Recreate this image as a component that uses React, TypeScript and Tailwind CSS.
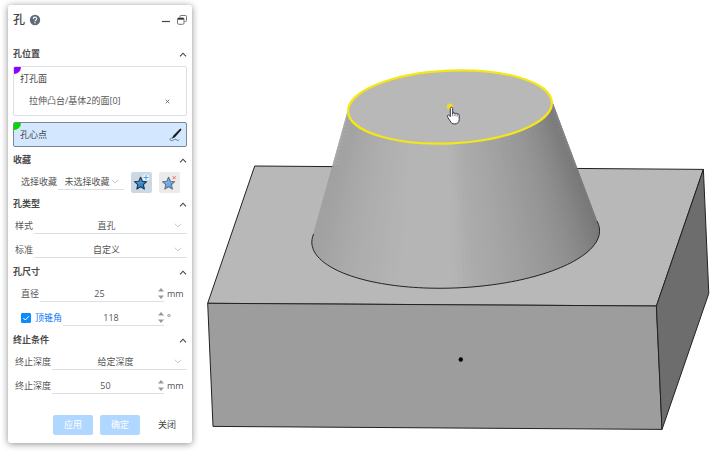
import { useState, type ReactNode } from "react";

const FONT = "font-['Open_Sans','Noto_Sans_CJK_SC',sans-serif]";

function ChevronUp() {
  return (
    <svg viewBox="0 0 8 5" className="h-[5px] w-2" fill="none" stroke="#444" strokeWidth="1.1">
      <path d="M1 4.3 4 1.2 7 4.3" />
    </svg>
  );
}

function Section({ title, children }: { title: string; children: ReactNode }) {
  const [open, setOpen] = useState(true);
  return (
    <section>
      <h2>
        <button
          type="button"
          aria-expanded={open}
          onClick={() => setOpen(!open)}
          className="flex h-5 w-full items-center justify-between font-bold text-[#4a4a4a]"
        >
          {title}
          <ChevronUp />
        </button>
      </h2>
      {open && children}
    </section>
  );
}

function Choice({ id, value, className }: { id: string; value: string; className: string }) {
  return (
    <div className={`relative h-4 border-b border-[#dcdfe6] ${className}`}>
      <select
        id={id}
        defaultValue={value}
        className="h-[15px] w-full appearance-none bg-transparent pr-2 text-center [text-align-last:center] outline-none"
      >
        <option>{value}</option>
      </select>
      <svg
        viewBox="0 0 8 5"
        className="pointer-events-none absolute top-[5px] right-[5px] h-[5px] w-2"
        fill="none"
        stroke="#c3c7ce"
      >
        <path d="M.8.7 4 4 7.2.7" />
      </svg>
    </div>
  );
}

function Quantity({ id, initial, unit }: { id: string; initial: number; unit: string }) {
  const [value, setValue] = useState(String(initial));
  const step = (by: number) => setValue(String((Number(value) || 0) + by));
  return (
    <>
      <div className="flex h-4 min-w-0 flex-1 items-center border-b border-[#dcdfe6]">
        <input
          id={id}
          type="text"
          inputMode="numeric"
          value={value}
          onChange={(e) => setValue(e.target.value)}
          className="w-full min-w-0 flex-1 bg-transparent pl-px text-center outline-none"
        />
        <div className="flex w-[6px] flex-col gap-[3px]">
          <button type="button" aria-label="+" onClick={() => step(1)}>
            <svg viewBox="0 0 6 4" className="block h-1 w-[6px]" fill="#999">
              <path d="M3 0 6 3.6H0z" />
            </svg>
          </button>
          <button type="button" aria-label="-" onClick={() => step(-1)}>
            <svg viewBox="0 0 6 4" className="block h-1 w-[6px]" fill="#999">
              <path d="M3 4 0 .4h6z" />
            </svg>
          </button>
        </div>
      </div>
      <span className="w-[23px] pl-[3px]">{unit}</span>
    </>
  );
}

function Star({ add }: { add: boolean }) {
  return (
    <svg viewBox="0 0 21 21" className="h-[21px] w-[21px]">
      <defs>
        <linearGradient id={add ? "star-add" : "star-del"} x1="0" y1="0" x2="1" y2="1">
          <stop offset="0" stopColor={add ? "#5fb4f5" : "#8cc8f5"} />
          <stop offset="1" stopColor={add ? "#1668c4" : "#4b92d8"} />
        </linearGradient>
      </defs>
      <path
        d="M9.6 5.2 11.4 9.3 15.7 9.7 12.4 12.6 13.4 17 9.6 14.7 5.8 17 6.8 12.6 3.5 9.7 7.8 9.3z"
        fill={`url(#${add ? "star-add" : "star-del"})`}
        stroke={add ? "#27313d" : "#667382"}
        strokeWidth="1.1"
        strokeLinejoin="round"
      />
      {add ? (
        <>
          <circle cx="15" cy="5.5" r="3.2" fill="#eef5fb" />
          <path d="M15 3v5M12.500 5.500h5" stroke="#4aa3e8" strokeWidth="1" />
        </>
      ) : (
        <>
          <rect x="13" y="3.500" width="4.500" height="4.500" fill="#f8e4e4" />
          <path d="m13.700 4.200 3 3m0-3-3 3" stroke="#dc6464" strokeWidth=".9" />
        </>
      )}
    </svg>
  );
}

function HolePanel() {
  return (
    <aside
      className={`${FONT} relative z-10 mt-[5px] ml-2 w-46 shrink-0 self-start rounded-[3px] bg-white px-[5px] pb-2 text-[9px] leading-3 text-[#555] shadow-[0_1px_7px_rgba(0,0,0,0.45)]`}
    >
      <header className="flex h-[30px] items-center text-[#444]">
        <h1 className="text-xs leading-4 font-medium">孔</h1>
        <button type="button" aria-label="帮助" className="ml-1">
          <svg viewBox="0 0 12 12" className="h-3 w-3">
            <circle cx="6" cy="6" r="5.200" fill="#5f6b7a" />
            <path
              d="M4.300 4.900C4.300 2.600 7.700 2.600 7.700 4.800 7.700 6 6 5.900 6 7.200"
              fill="none"
              stroke="#fff"
              strokeWidth="1.100"
            />
            <circle cx="6" cy="8.800" r=".7" fill="#fff" />
          </svg>
        </button>
        <button type="button" aria-label="最小化" className="ml-auto">
          <svg viewBox="0 0 10 10" className="h-[10px] w-[10px]">
            <path d="M1 6.500h8" stroke="#444" strokeWidth="1.200" />
          </svg>
        </button>
        <button type="button" aria-label="还原" className="ml-[6px]">
          <svg viewBox="0 0 10 10" className="h-[10px] w-[10px]" fill="none" stroke="#777">
            <path d="M3 2.500V1.300Q3 .5 3.800.5h4.900q.8 0 .8.800v4.400q0 .8-.8.8H7.500" />
            <rect x=".5" y="3" width="6.500" height="6.300" rx="1.200" fill="#fff" />
            <path d="M.8 3.800h6" strokeWidth="1.800" stroke="#333" />
          </svg>
        </button>
      </header>

      <form onSubmit={(e) => e.preventDefault()} className="mt-[9px]">
        <Section title="孔位置">
          <div className="relative mt-[2px] flex h-[50px] flex-col overflow-hidden rounded-[2px] border border-[#dcdfe6] pt-[6px] pr-4 pl-[6px] text-[#444]">
            <i className="absolute top-0 left-0 h-[7px] w-[7px] rounded-br-full bg-[#8f00ff]" />
            <span>打孔面</span>
            <div className="mt-[10px] flex items-center justify-between pl-[9px] text-[#555]">
              <span>拉伸凸台/基体2的面[0]</span>
              <button type="button" aria-label="移除">
                <svg viewBox="0 0 5 5" className="h-[5px] w-[5px]" stroke="#555" strokeWidth=".8">
                  <path d="m.7.700 3.600 3.600m0-3.600-3.600 3.600" />
                </svg>
              </button>
            </div>
          </div>
          <button
            type="button"
            className="relative mt-[6px] mb-[3px] flex h-[25px] w-full items-center justify-between overflow-hidden rounded-[2px] border border-[#7b8794] bg-[#d3e8ff] pr-1 pl-[6px] text-[#444]"
          >
            <i className="absolute top-0 left-0 h-[7px] w-[7px] rounded-br-full bg-[#00dc00]" />
            孔心点
            <svg viewBox="0 0 13 14" className="h-[14px] w-[13px]" fill="none">
              <path d="M11.300.600q1 .2 1.200 1.200L6 9.300 2.800 10.800 4.200 7.800z" fill="#1c1c1c" />
              <path
                d="M3.300 10C.5 10 .3 12 2 12.600c2.200.7 3.200-1.800 5-1.400.9.300.4 1.400 1.500 1.300.8 0 1.200-.5 1.700-.8"
                stroke="#60768e"
                strokeWidth=".9"
              />
            </svg>
          </button>
        </Section>

        <Section title="收藏">
          <div className="flex h-6 items-center pr-[7px] pl-2">
            <label htmlFor="favorite" className="mr-px whitespace-nowrap">
              选择收藏
            </label>
            <Choice id="favorite" value="未选择收藏" className="min-w-0 flex-1" />
            <button type="button" aria-label="添加收藏" className="ml-[7px] rounded-[2px] bg-[#cbd9e5]">
              <Star add />
            </button>
            <button type="button" aria-label="删除收藏" className="ml-[7px] rounded-[2px] bg-[#ebebeb]">
              <Star add={false} />
            </button>
          </div>
        </Section>

        <Section title="孔类型">
          <div className="flex h-6 items-center pl-[2px]">
            <label htmlFor="style">样式</label>
            <Choice id="style" value="直孔" className="ml-px flex-1" />
          </div>
          <div className="flex h-6 items-center pl-[2px]">
            <label htmlFor="standard">标准</label>
            <Choice id="standard" value="自定义" className="ml-px flex-1" />
          </div>
        </Section>

        <Section title="孔尺寸">
          <div className="flex h-6 items-center pl-2">
            <label htmlFor="diameter" className="mr-px">
              直径
            </label>
            <Quantity id="diameter" initial={25} unit="mm" />
          </div>
          <div className="flex h-6 items-center pl-2">
            <label className="relative mr-1 flex h-[10px] w-[10px]">
              <input
                type="checkbox"
                defaultChecked
                aria-label="顶锥角"
                className="peer h-[10px] w-[10px] appearance-none rounded-[1px] border border-[#0d8bfd] checked:bg-[#0d8bfd]"
              />
              <svg
                viewBox="0 0 10 10"
                className="pointer-events-none absolute inset-0 hidden peer-checked:block"
                fill="none"
                stroke="#fff"
              >
                <path d="m2.300 5 2 2 3.600-3.800" />
              </svg>
            </label>
            <label htmlFor="angle" className="mr-px text-[#0d7bfd]">
              顶锥角
            </label>
            <Quantity id="angle" initial={118} unit="°" />
          </div>
        </Section>

        <Section title="终止条件">
          <div className="flex h-6 items-center pl-[2px]">
            <label htmlFor="end-type">终止深度</label>
            <Choice id="end-type" value="给定深度" className="ml-px flex-1" />
          </div>
          <div className="flex h-6 items-center pl-[2px]">
            <label htmlFor="end-depth" className="mr-px">
              终止深度
            </label>
            <Quantity id="end-depth" initial={50} unit="mm" />
          </div>
        </Section>

        <footer className="mt-[17px] flex justify-end gap-[7px]">
          <button type="submit" className="h-5 w-10 rounded-[2px] bg-[#b0d7ff] text-white">
            应用
          </button>
          <button type="submit" className="h-5 w-10 rounded-[2px] bg-[#b0d7ff] text-white">
            确定
          </button>
          <button type="button" className="h-5 w-10 text-[#444]">
            关闭
          </button>
        </footer>
      </form>
    </aside>
  );
}

type Ring = { cx: number; cy: number; rx: number; ry: number };
const TOP: Ring = { cx: 450, cy: 107, rx: 102, ry: 36.4 };
const BASE: Ring = { cx: 455.7, cy: 236.5, rx: 144, ry: 51.4 };
const TILT = -2.6;

function onRing(r: Ring, deg: number): [number, number] {
  const a = (deg * Math.PI) / 180;
  const t = (TILT * Math.PI) / 180;
  const x = r.rx * Math.cos(a);
  const y = r.ry * Math.sin(a);
  return [r.cx + x * Math.cos(t) - y * Math.sin(t), r.cy + x * Math.sin(t) + y * Math.cos(t)];
}

// Grey level of the cone wall by angle, from the right silhouette round the front to the left.
const SHADE: [number, number][] = [
  [-20, 112],
  [0, 116],
  [20, 128],
  [45, 148],
  [70, 164],
  [84, 172],
  [92, 181],
  [112, 181],
  [135, 173],
  [160, 163],
  [200, 157],
];

function shadeAt(deg: number) {
  const i = Math.max(
    1,
    SHADE.findIndex(([d]) => d >= deg),
  );
  const [d0, s0] = SHADE[i - 1];
  const [d1, s1] = SHADE[i];
  const s = Math.round(s0 + ((s1 - s0) * (deg - d0)) / (d1 - d0));
  return `rgb(${s},${s},${s})`;
}

const FIRST = -10;
const LAST = 190;

const WALL = Array.from({ length: (LAST - FIRST) / 2 }, (_, i) => {
  const from = FIRST + i * 2;
  const to = Math.min(from + 3, LAST);
  const pts = [onRing(TOP, from), onRing(TOP, to), onRing(BASE, to), onRing(BASE, from)];
  return { points: pts.map((p) => p.join(",")).join(" "), fill: shadeAt(from + 1) };
});

const BASE_EDGE = Array.from({ length: (LAST - FIRST) / 2 + 1 }, (_, i) =>
  onRing(BASE, FIRST + i * 2).join(","),
).join(" ");

function Viewport() {
  return (
    <main className="min-w-0 flex-1">
      <svg viewBox="192 0 526 454" className="block h-auto w-full" role="img" aria-label="模型">
        <g stroke="#222" strokeWidth="1" strokeLinejoin="round">
          <path d="M254.700 166 703.400 169.400 656.400 306 207.700 303.300z" fill="#b8b8b8" />
          <path d="M207.700 303.300 656.400 306 662 429.400 213 426.400z" fill="#9d9d9d" />
          <path d="M703.400 169.400 708.800 293.400 662 429.400 656.400 306z" fill="#6d6d6d" />
        </g>
        {WALL.map((w) => (
          <polygon key={w.points} points={w.points} fill={w.fill} />
        ))}
        <polyline points={BASE_EDGE} fill="none" stroke="#222" strokeWidth="1" />
        <ellipse
          cx={TOP.cx}
          cy={TOP.cy}
          rx={TOP.rx}
          ry={TOP.ry}
          transform={`rotate(${TILT} ${TOP.cx} ${TOP.cy})`}
          fill="#b8b8b8"
          stroke="#f5e616"
          strokeWidth="2.200"
        />
        <circle cx="460.800" cy="359.500" r="2.200" fill="#000" />
        <circle cx="449.800" cy="106.500" r="3" fill="#f2dc1e" />
        <path
          d="M450.300 108.500c0-1.600 2.400-1.600 2.400 0v5c.2-1.300 2.300-1.100 2.300.3.300-1 2.200-.8 2.200.6.400-.9 2-.5 2 .8v4.300c0 2.600-1.700 4.500-4.600 4.500-2.600 0-3.500-1.300-4.600-3.200l-2.500-4c-.8-1.500.9-2.300 1.900-1.200l.9 1.100z"
          fill="#fff"
          stroke="#333645"
          strokeWidth="1"
          strokeLinejoin="round"
        />
        <path d="M452.700 113v3M455 113.800v2.400M457.200 114.500v2" stroke="#333645" strokeWidth=".7" />
      </svg>
    </main>
  );
}

export default function App() {
  return (
    <div className="flex min-h-screen bg-white">
      <HolePanel />
      <Viewport />
    </div>
  );
}
